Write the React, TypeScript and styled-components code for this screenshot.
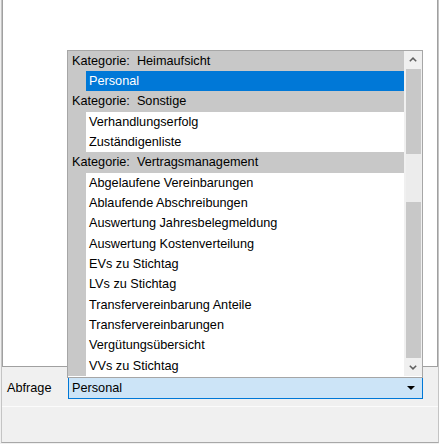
import React from "react";
import styled, { createGlobalStyle } from "styled-components";

const Global = createGlobalStyle`
  html, body { margin: 0; padding: 0; background: #f0f0f0; }
  body { font-family: "Liberation Sans", Arial, sans-serif; font-size: 12.7px; color: #000; }
  * { box-sizing: border-box; }
`;

const Frame = styled.div`
  width: 438px;
  height: 443px;
  margin-left: 1px;
  border-left: 1px solid #c4c4c4;
  border-right: 1px solid #c4c4c4;
  border-bottom: 1px solid #a8a8a8;
  display: flex;
  flex-direction: column;
`;

const Panel = styled.div`
  height: 367px;
  background: #fff;
  border-left: 1px solid #a0a0a0;
  border-right: 1px solid #a0a0a0;
  border-bottom: 1px solid #a0a0a0;
`;

const ControlRow = styled.div`
  display: flex;
  align-items: center;
  margin-top: 10px;
  height: 22px;
`;

const Label = styled.span`
  width: 66px;
  padding-left: 5px;
`;

const ComboWrap = styled.div`
  position: relative;
  width: 355px;
  height: 22px;
`;

const Combo = styled.div`
  height: 22px;
  display: flex;
  align-items: center;
  justify-content: space-between;
  padding: 0 7px 0 3px;
  background: #cce4f7;
  border: 1px solid #0078d7;
`;

const Separator = styled.div`
  margin-top: 7px;
  border-top: 1px solid #fbfbfb;
`;

const Popup = styled.div`
  position: absolute;
  left: -1px;
  bottom: calc(100% - 1px);
  width: 356px;
  display: flex;
  background: #fff;
  border: 1px solid #a6a6a6;
  padding-bottom: 1px;
`;

const List = styled.div`
  flex: 1;
  background: #c8c8c8;
  display: flex;
  flex-direction: column;
`;

const Row = styled.div<{ $kind: "cat" | "item"; $selected?: boolean }>`
  height: 20.33px;
  line-height: 20.33px;
  white-space: pre;
  margin-left: ${(p) => (p.$kind === "item" ? "18px" : "0")};
  padding-left: ${(p) => (p.$kind === "item" ? "3px" : "4px")};
  background: ${(p) =>
    p.$kind === "cat" ? "#c8c8c8" : p.$selected ? "#0078d7" : "#ffffff"};
  color: ${(p) => (p.$selected ? "#ffffff" : "#000000")};
`;

const ScrollBar = styled.div`
  width: 18px;
  background: #f0f0f0;
  display: flex;
  flex-direction: column;
  align-items: center;
`;

const ArrowButton = styled.div`
  height: 18px;
  width: 100%;
  display: flex;
  align-items: center;
  justify-content: center;
`;

const Track = styled.div`
  flex: 1;
  width: 15px;
  display: flex;
  flex-direction: column;
`;

const ThumbPart = styled.div<{ $h?: number; $light?: boolean }>`
  ${(p) => (p.$h ? `height: ${p.$h}px;` : "flex: 1;")}
  background: ${(p) => (p.$light ? "#ececec" : "#c8c8c8")};
`;

type Entry = { kind: "cat" | "item"; text: string; selected?: boolean };

const entries: Entry[] = [
  { kind: "cat", text: "Kategorie:  Heimaufsicht" },
  { kind: "item", text: "Personal", selected: true },
  { kind: "cat", text: "Kategorie:  Sonstige" },
  { kind: "item", text: "Verhandlungserfolg" },
  { kind: "item", text: "Zuständigenliste" },
  { kind: "cat", text: "Kategorie:  Vertragsmanagement" },
  { kind: "item", text: "Abgelaufene Vereinbarungen" },
  { kind: "item", text: "Ablaufende Abschreibungen" },
  { kind: "item", text: "Auswertung Jahresbelegmeldung" },
  { kind: "item", text: "Auswertung Kostenverteilung" },
  { kind: "item", text: "EVs zu Stichtag" },
  { kind: "item", text: "LVs zu Stichtag" },
  { kind: "item", text: "Transfervereinbarung Anteile" },
  { kind: "item", text: "Transfervereinbarungen" },
  { kind: "item", text: "Vergütungsübersicht" },
  { kind: "item", text: "VVs zu Stichtag" },
];

const Chevron = ({ up }: { up?: boolean }) => (
  <svg width="8" height="5" viewBox="0 0 8 5">
    <path
      d={up ? "M0.8 4.3 L4 1.1 L7.2 4.3" : "M0.8 0.7 L4 3.9 L7.2 0.7"}
      fill="none"
      stroke="#606060"
      strokeWidth="1.5"
    />
  </svg>
);

export default function App() {
  return (
    <>
      <Global />
      <Frame>
        <Panel />
        <ControlRow>
          <Label>Abfrage</Label>
          <ComboWrap>
            <Popup>
              <List>
                {entries.map((e, i) => (
                  <Row key={i} $kind={e.kind} $selected={e.selected}>
                    {e.text}
                  </Row>
                ))}
              </List>
              <ScrollBar>
                <ArrowButton>
                  <Chevron up />
                </ArrowButton>
                <Track>
                  <ThumbPart $h={85} />
                  <ThumbPart $h={48} $light />
                  <ThumbPart />
                </Track>
                <ArrowButton>
                  <Chevron />
                </ArrowButton>
              </ScrollBar>
            </Popup>
            <Combo>
              <span>Personal</span>
              <svg width="8" height="4" viewBox="0 0 8 4">
                <path d="M0 0 H8 L4 4 Z" fill="#000" />
              </svg>
            </Combo>
          </ComboWrap>
        </ControlRow>
        <Separator />
      </Frame>
    </>
  );
}
